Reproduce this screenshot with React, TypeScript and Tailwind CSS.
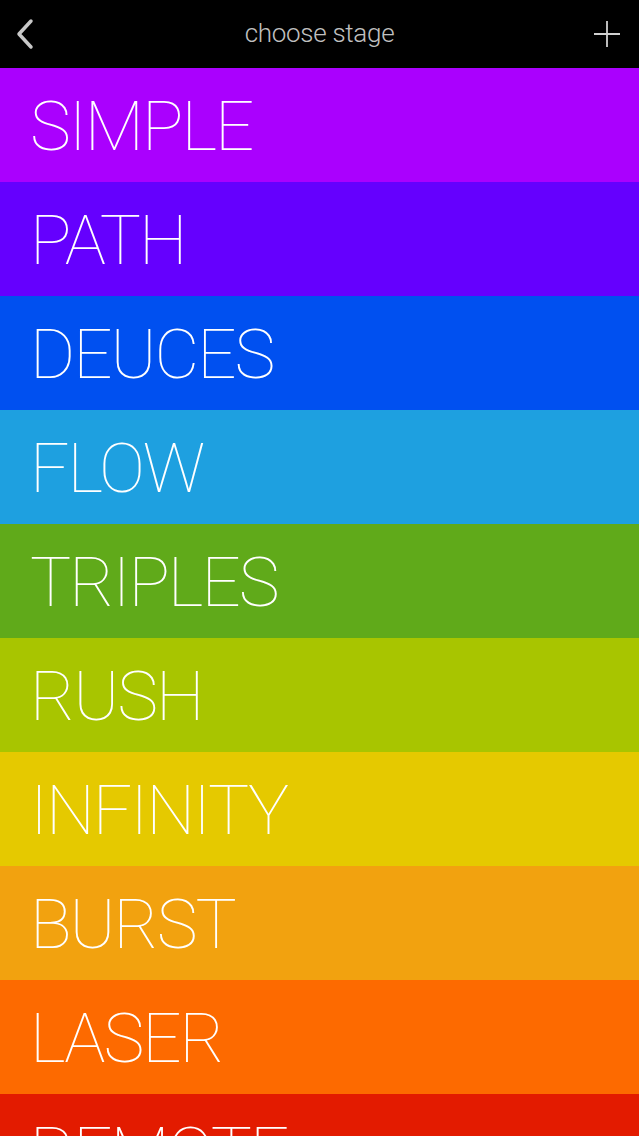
import React from 'react';

const stages = [
  { name: 'SIMPLE', color: 'bg-[#aa00fe]' },
  { name: 'PATH', color: 'bg-[#6500fe]' },
  { name: 'DEUCES', color: 'bg-[#0050f0]' },
  { name: 'FLOW', color: 'bg-[#1ea0e0]' },
  { name: 'TRIPLES', color: 'bg-[#60aa1a]' },
  { name: 'RUSH', color: 'bg-[#a8c500]' },
  { name: 'INFINITY', color: 'bg-[#e5c900]' },
  { name: 'BURST', color: 'bg-[#f2a20f]' },
  { name: 'LASER', color: 'bg-[#fd6a00]' },
  { name: 'REMOTE', color: 'bg-[#e31b00]' },
];

const App = () => {
  return (
    <div className="w-[639px] h-[1136px] overflow-hidden bg-black" style={{ fontFamily: 'Roboto, "Liberation Sans", sans-serif' }}>
      {/* header */}
      <div className="h-[68px] bg-black flex items-center justify-between px-[16px] relative">
        <svg width="18" height="32" viewBox="0 0 18 32" className="mt-[-1px]">
          <path d="M15 3 L3 16 L15 29" fill="none" stroke="#c8c8c8" strokeWidth="3.5" strokeLinecap="round" strokeLinejoin="round" />
        </svg>
        <span className="absolute left-1/2 -translate-x-1/2 text-[26px] font-light text-[#c0c0c0] tracking-[-0.3px] pb-[1px]">choose stage</span>
        <svg width="28" height="28" viewBox="0 0 28 28" className="mr-[2px]">
          <path d="M14 1 V27 M1 14 H27" stroke="#d0d0d0" strokeWidth="1.8" />
        </svg>
      </div>

      {/* stage list */}
      <div className="flex flex-col">
        {stages.map((s) => (
          <div key={s.name} className={`${s.color} h-[114px] shrink-0 flex items-center pl-[30px] pt-[3px]`}>
            <span className="text-white font-thin text-[69px] leading-none tracking-[-2px]">{s.name}</span>
          </div>
        ))}
      </div>
    </div>
  );
};

export default App;
